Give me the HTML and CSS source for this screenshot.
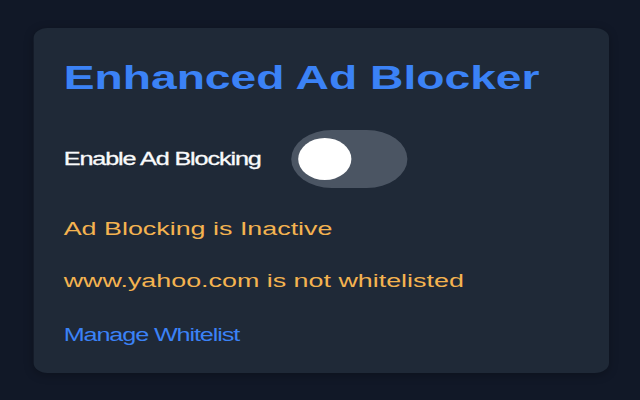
FILE: index.html
```html
<!DOCTYPE html>
<html lang="en">
<head>
    <meta charset="UTF-8">
    <meta name="viewport" content="width=device-width, initial-scale=1.0">
    <title>Enhanced Ad Blocker</title>
    <link rel="stylesheet" href="styles.css">
</head>
<body>
    <div class="popup">
        <div class="card">
            <h1 class="title">Enhanced Ad Blocker</h1>
            <div class="toggle-row">
                <label for="enabled" class="toggle-label">Enable Ad Blocking</label>
                <label class="switch">
                    <input type="checkbox" id="enabled">
                    <span class="slider"><span class="knob"></span></span>
                </label>
            </div>
            <p class="status">Ad Blocking is Inactive</p>
            <p class="status">www.yahoo.com is not whitelisted</p>
            <a href="#" class="manage-link">Manage Whitelist</a>
        </div>
    </div>
</body>
</html>
```

FILE: styles.css
```css
/* page */
body {
    margin: 0;
    background-color: #111827;
    font-family: "Liberation Sans", Arial, sans-serif;
    overflow: hidden;
}

/* popup is drawn wide, like the store screenshot */
.popup {
    width: 458px;
    height: 400px;
    padding: 28px 23.5px 0;
    box-sizing: border-box;
    transform: scaleX(1.4);
    transform-origin: 0 0;
}

.card {
    background-color: #1f2937;
    border-radius: 10px;
    padding: 30px 22px 27.5px;
    box-shadow: 0 2px 8px rgba(0, 0, 0, 0.25);
}

.title {
    margin: 0 0 32px;
    font-size: 33px;
    line-height: 40px;
    font-weight: bold;
    color: #3b82f6;
}

/* toggle */
.toggle-row {
    display: flex;
    align-items: center;
    gap: 22px;
    margin-bottom: 29px;
}

.toggle-label {
    font-size: 18px;
    letter-spacing: -0.8px;
    color: #f9fafb;
    -webkit-text-stroke: 0.3px #f9fafb; /* a little heavier, like the original */
}

.switch input {
    display: none;
}

.slider {
    display: flex;
    align-items: center;
    width: 83px;
    height: 58px;
    padding: 0 5px;
    box-sizing: border-box;
    border-radius: 29px;
    background-color: #4b5563;
    cursor: pointer;
}

.knob {
    width: 38px;
    height: 42px;
    border-radius: 50%;
    background-color: #fff;
}

/* status lines */
.status {
    margin: 0 0 27.5px;
    font-size: 19.2px;
    line-height: 24px;
    color: #f4b350;
}

.status + .status {
    margin-bottom: 31px;
}

.manage-link {
    display: block;
    font-size: 18px;
    line-height: 22px;
    letter-spacing: -0.8px;
    color: #3b82f6;
    text-decoration: none;
}
```
